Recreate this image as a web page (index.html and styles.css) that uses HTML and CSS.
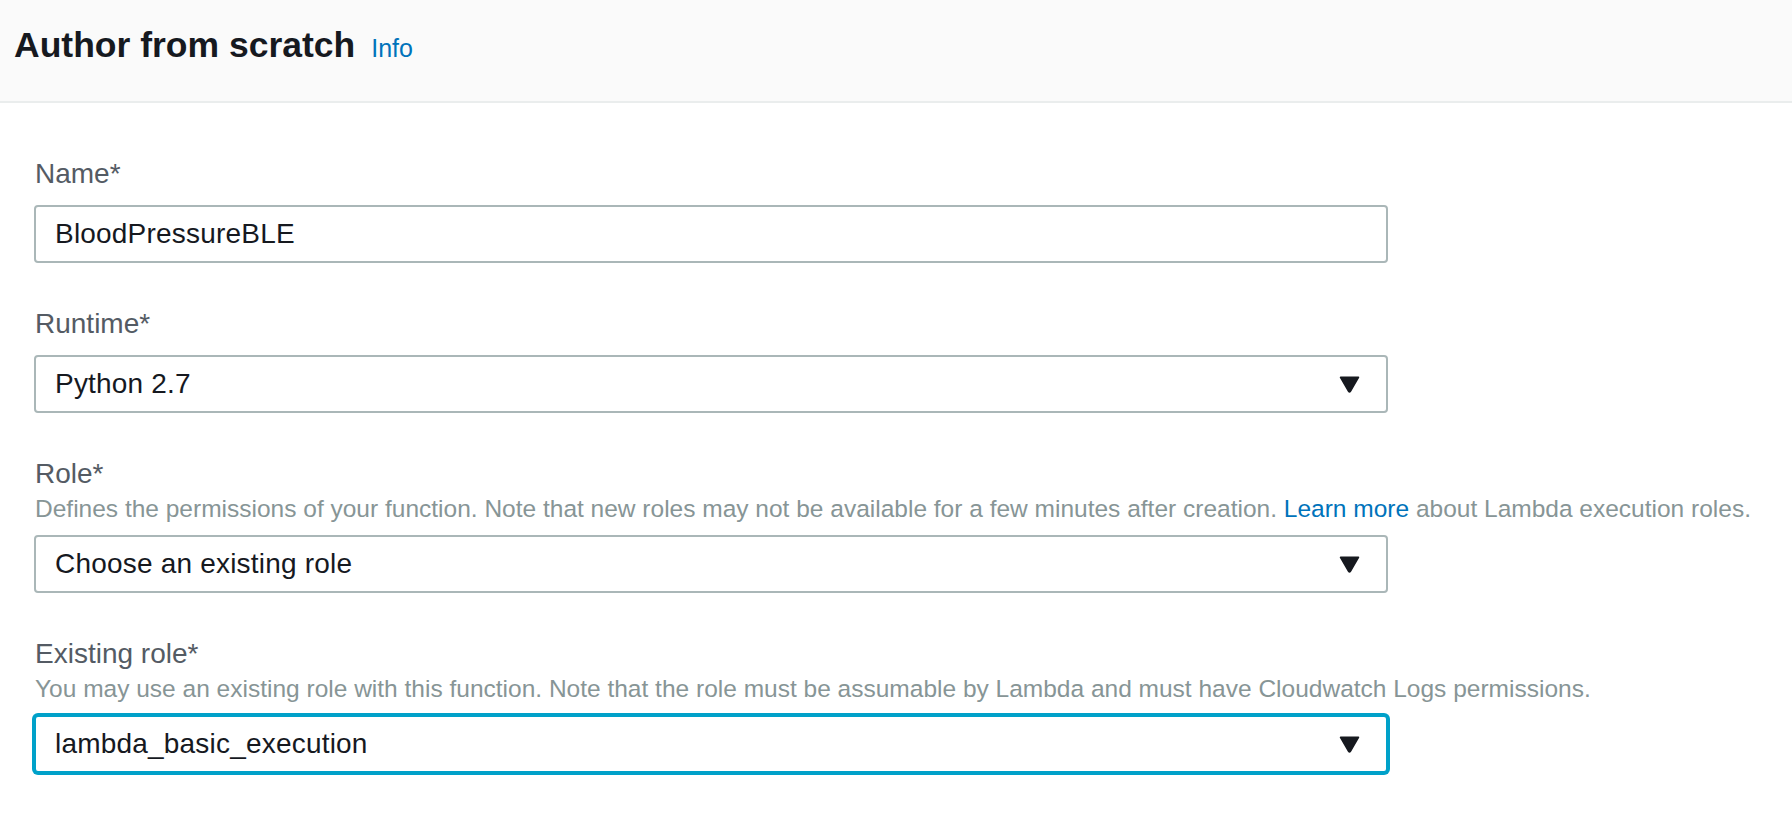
FILE: index.html
```html
<!DOCTYPE html>
<html lang="en">
<head>
<meta charset="utf-8">
<title>Author from scratch</title>
<link rel="stylesheet" href="styles.css">
</head>
<body>
<header class="panel-header">
  <h2 class="panel-title">Author from scratch</h2>
  <a class="info-link" href="#">Info</a>
</header>
<main class="panel-body">
  <div class="field">
    <label class="field-label" for="fn-name">Name*</label>
    <input class="control" id="fn-name" type="text" value="BloodPressureBLE">
  </div>
  <div class="field">
    <div class="field-label">Runtime*</div>
    <div class="control select">
      <span>Python 2.7</span>
      <svg class="caret" width="21" height="17" viewBox="0 0 21 17"><path d="M1.5 1.3 H19.5 L11.4 15.4 Q10.5 16.7 9.6 15.4 Z" fill="#16191f" stroke="#16191f" stroke-width="1.5" stroke-linejoin="round"/></svg>
    </div>
  </div>
  <div class="field">
    <div class="field-label">Role*</div>
    <div class="field-desc">Defines the permissions of your function. Note that new roles may not be available for a few minutes after creation. <a class="link" href="#">Learn more</a> about Lambda execution roles.</div>
    <div class="control select">
      <span>Choose an existing role</span>
      <svg class="caret" width="21" height="17" viewBox="0 0 21 17"><path d="M1.5 1.3 H19.5 L11.4 15.4 Q10.5 16.7 9.6 15.4 Z" fill="#16191f" stroke="#16191f" stroke-width="1.5" stroke-linejoin="round"/></svg>
    </div>
  </div>
  <div class="field">
    <div class="field-label">Existing role*</div>
    <div class="field-desc">You may use an existing role with this function. Note that the role must be assumable by Lambda and must have Cloudwatch Logs permissions.</div>
    <div class="control select focused">
      <span>lambda_basic_execution</span>
      <svg class="caret" width="21" height="17" viewBox="0 0 21 17"><path d="M1.5 1.3 H19.5 L11.4 15.4 Q10.5 16.7 9.6 15.4 Z" fill="#16191f" stroke="#16191f" stroke-width="1.5" stroke-linejoin="round"/></svg>
    </div>
  </div>
</main>
</body>
</html>
```
FILE: styles.css
```css
* {
  box-sizing: border-box;
}

html, body {
  margin: 0;
  padding: 0;
  background: #ffffff;
}

body {
  font-family: "Liberation Sans", Arial, sans-serif;
  color: #16191f;
  width: 1792px;
  height: 818px;
  overflow: hidden;
}

.panel-header {
  display: flex;
  align-items: baseline;
  gap: 16px;
  height: 103px;
  padding: 25px 14px 0;
  background: #fafafa;
  border-bottom: 2px solid #eaeded;
}

.panel-title {
  margin: 0;
  font-size: 35.5px;
  line-height: 40px;
  font-weight: 700;
  color: #16191f;
}

.info-link {
  font-size: 25px;
  line-height: 40px;
  color: #0073bb;
  text-decoration: none;
}

.panel-body {
  display: flex;
  flex-direction: column;
  gap: 45px;
  padding: 55px 34px 0;
}

.field {
  display: flex;
  flex-direction: column;
  width: 1354px;
}

.field-label {
  font-size: 28px;
  line-height: 32px;
  color: #545b64;
  margin: 0 0 15px 1px;
}

.field-desc {
  font-size: 24.5px;
  line-height: 26px;
  color: #879596;
  margin: -9px 0 13px 1px;
  white-space: nowrap;
}

.link {
  color: #0073bb;
  text-decoration: none;
}

.control {
  height: 58px;
  width: 100%;
  border: 2px solid #aab7b8;
  border-radius: 4px;
  background: #ffffff;
  padding: 0 19px;
  font-family: inherit;
  font-size: 28px;
  line-height: 32px;
  letter-spacing: 0.2px;
  color: #16191f;
  outline: none;
}

.select {
  display: flex;
  align-items: center;
  justify-content: space-between;
  padding-right: 26px;
}

.caret {
  display: block;
  flex: none;
}

.focused {
  border-color: #00a1c9;
  box-shadow: 0 0 0 2px #00a1c9;
}
```
